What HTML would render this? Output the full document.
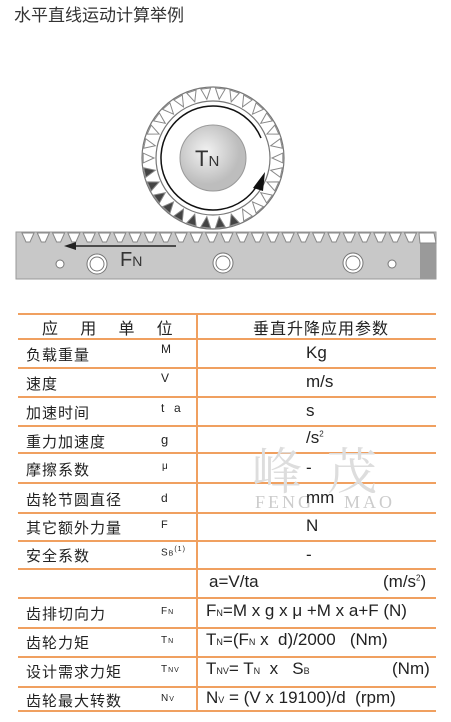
<!DOCTYPE html>
<html><head><meta charset="utf-8"><style>
body{margin:0;width:451px;height:722px;background:#fff;position:relative;overflow:hidden;font-family:"Liberation Sans","Noto Sans CJK SC",sans-serif;color:#222}
.t{position:absolute;left:14px;top:1px;font-size:17px;color:#333}
.c{position:absolute;font-size:15px;white-space:nowrap;letter-spacing:1px}
.v{font-size:17px;letter-spacing:0}
.l{position:absolute;left:18px;width:418px;height:2px;background:#f0a060}
</style></head><body>
<div class="t">水平直线运动计算举例</div>
<svg width="451" height="300" style="position:absolute;left:0;top:0">
<defs><radialGradient id="g" cx="40%" cy="40%"><stop offset="0" stop-color="#f2f2f2"/><stop offset="1" stop-color="#bdbdbd"/></radialGradient></defs>
<g transform="translate(213,158)">
<circle r="71" fill="#fff" stroke="#777" stroke-width="1.2"/>
<g id="teeth" stroke="#888" stroke-width="1"></g>
<circle r="57" fill="#fff" stroke="#777" stroke-width="1.2"/>
<path d="M 48 -20 A 52 52 0 1 0 45 26" fill="none" stroke="#111" stroke-width="1.5"/>
<circle r="33" fill="url(#g)" stroke="#999"/>
<text x="-18" y="8" font-size="22" fill="#333" font-family="Liberation Sans">T<tspan font-size="15">N</tspan></text>
<polygon points="40,30 52,14 50,33" fill="#111"/>
</g>
<rect x="16" y="232" width="420" height="47" fill="#c8c8c8" stroke="#999"/>
<rect x="420" y="243" width="16" height="36" fill="#9a9a9a"/>
<path id="rack" d="" fill="#fff" stroke="#888"/>
<line x1="70" y1="246" x2="176" y2="246" stroke="#222" stroke-width="1.5"/>
<polygon points="64,246 76,242 76,250" fill="#222"/>
<text x="120" y="266" font-size="20" fill="#333">F<tspan font-size="14">N</tspan></text>
<circle cx="60" cy="264" r="4" fill="#fff" stroke="#777"/>
<circle cx="392" cy="264" r="4" fill="#fff" stroke="#777"/>
<g fill="#fff" stroke="#777"><circle cx="97" cy="264" r="10"/><circle cx="97" cy="264" r="7"/><circle cx="223" cy="263" r="10"/><circle cx="223" cy="263" r="7"/><circle cx="353" cy="263" r="10"/><circle cx="353" cy="263" r="7"/></g>
</svg>
<script>
var t=document.getElementById('teeth'),s='';
for(var i=0;i<30;i++){var a=i*Math.PI*2/30,a1=a-0.07,a2=a+0.07;
var p=[[70*Math.cos(a1),70*Math.sin(a1)],[59*Math.cos(a),59*Math.sin(a)],[70*Math.cos(a2),70*Math.sin(a2)]];
var dark=(a>1.2&&a<3.0);
s+='<polygon points="'+p.map(q=>q.join(',')).join(' ')+'" fill="'+(dark?'#444':'#fff')+'"/>';}
t.innerHTML=s;
var d='';for(var x=22;x<418;x+=15.3){d+='M'+x+' 233 L'+(x+4)+' 242 L'+(x+8)+' 242 L'+(x+12)+' 233 Z ';}
d+='M419 233 L434 233 L436 243 L420 243 Z';document.getElementById('rack').setAttribute('d',d);
</script>
<div class="l" style="top:313px"></div><div class="l" style="top:338px"></div><div class="l" style="top:367px"></div><div class="l" style="top:396px"></div><div class="l" style="top:425px"></div><div class="l" style="top:452px"></div><div class="l" style="top:482px"></div><div class="l" style="top:512px"></div><div class="l" style="top:540px"></div><div class="l" style="top:568px"></div><div class="l" style="top:597px"></div><div class="l" style="top:627px"></div><div class="l" style="top:656px"></div><div class="l" style="top:686px"></div><div class="l" style="top:710px"></div>
<div style="position:absolute;left:196px;top:313px;width:2px;height:399px;background:#f0a060"></div>
<div class="c" style="left:252px;top:432px;font-size:50px;color:#ddd;font-family:'Noto Serif CJK SC',serif;letter-spacing:25px">峰茂</div>
<div class="c" style="left:255px;top:492px;font-size:18px;color:#ccc;font-family:'Liberation Serif',serif;letter-spacing:3px">FENG &nbsp; &nbsp;MAO</div>
<div class="c" style="left:42px;top:315px;font-size:16px;letter-spacing:0">应&nbsp;&nbsp;&nbsp;&nbsp;&nbsp;用&nbsp;&nbsp;&nbsp;&nbsp;&nbsp;单&nbsp;&nbsp;&nbsp;&nbsp;&nbsp;位</div>
<div class="c" style="left:253px;top:315px;font-size:16px">垂直升降应用参数</div>
<div class="c" style="left:26px;top:344px">负载重量</div><div class="c" style="left:161px;top:342px;font-size:12px">M</div><div class="c v" style="left:306px;top:343px">Kg</div>
<div class="c" style="left:26px;top:373px">速度</div><div class="c" style="left:161px;top:371px;font-size:12px">V</div><div class="c v" style="left:306px;top:372px">m/s</div>
<div class="c" style="left:26px;top:402px">加速时间</div><div class="c" style="left:161px;top:401px;font-size:12px">t&nbsp; a</div><div class="c v" style="left:306px;top:401px">s</div>
<div class="c" style="left:26px;top:431px">重力加速度</div><div class="c" style="left:161px;top:432px;font-size:13px">g</div><div class="c v" style="left:306px;top:428px">/s<sup style="font-size:8px">2</sup></div>
<div class="c" style="left:26px;top:459px">摩擦系数</div><div class="c" style="left:162px;top:461px;font-size:10px">μ</div><div class="c v" style="left:306px;top:458px">-</div>
<div class="c" style="left:26px;top:489px">齿轮节圆直径</div><div class="c" style="left:161px;top:491px;font-size:12px">d</div><div class="c v" style="left:306px;top:488px">mm</div>
<div class="c" style="left:26px;top:517px">其它额外力量</div><div class="c" style="left:161px;top:519px;font-size:11px">F</div><div class="c v" style="left:306px;top:516px">N</div>
<div class="c" style="left:26px;top:545px">安全系数</div><div class="c" style="left:161px;top:546px;font-size:10px">S<span style="font-size:7px">B</span><sup style="font-size:7px">(1)</sup></div><div class="c v" style="left:306px;top:545px">-</div>
<div class="c v" style="left:209px;top:572px">a=V/ta</div><div class="c v" style="left:383px;top:572px">(m/s<sup style="font-size:8px">2</sup>)</div>
<div class="c" style="left:26px;top:603px">齿排切向力</div><div class="c" style="left:161px;top:606px;font-size:10px">F<span style="font-size:7px">N</span></div><div class="c v" style="left:206px;top:601px">F<span style="font-size:9px">N</span>=M x g x μ +M x a+F (N)</div>
<div class="c" style="left:26px;top:632px">齿轮力矩</div><div class="c" style="left:161px;top:635px;font-size:10px">T<span style="font-size:7px">N</span></div><div class="c v" style="left:206px;top:630px">T<span style="font-size:9px">N</span>=(F<span style="font-size:9px">N</span> x &nbsp;d)/2000 &nbsp;&nbsp;(Nm)</div>
<div class="c" style="left:26px;top:661px">设计需求力矩</div><div class="c" style="left:161px;top:664px;font-size:10px">T<span style="font-size:7px">NV</span></div><div class="c v" style="left:206px;top:659px">T<span style="font-size:9px">NV</span>= T<span style="font-size:9px">N</span> &nbsp;x &nbsp;&nbsp;S<span style="font-size:9px">B</span></div><div class="c v" style="left:392px;top:659px">(Nm)</div>
<div class="c" style="left:26px;top:690px">齿轮最大转数</div><div class="c" style="left:161px;top:693px;font-size:10px">N<span style="font-size:7px">V</span></div><div class="c v" style="left:206px;top:688px">N<span style="font-size:9px">V</span> = (V x 19100)/d &nbsp;(rpm)</div>
</body></html>
